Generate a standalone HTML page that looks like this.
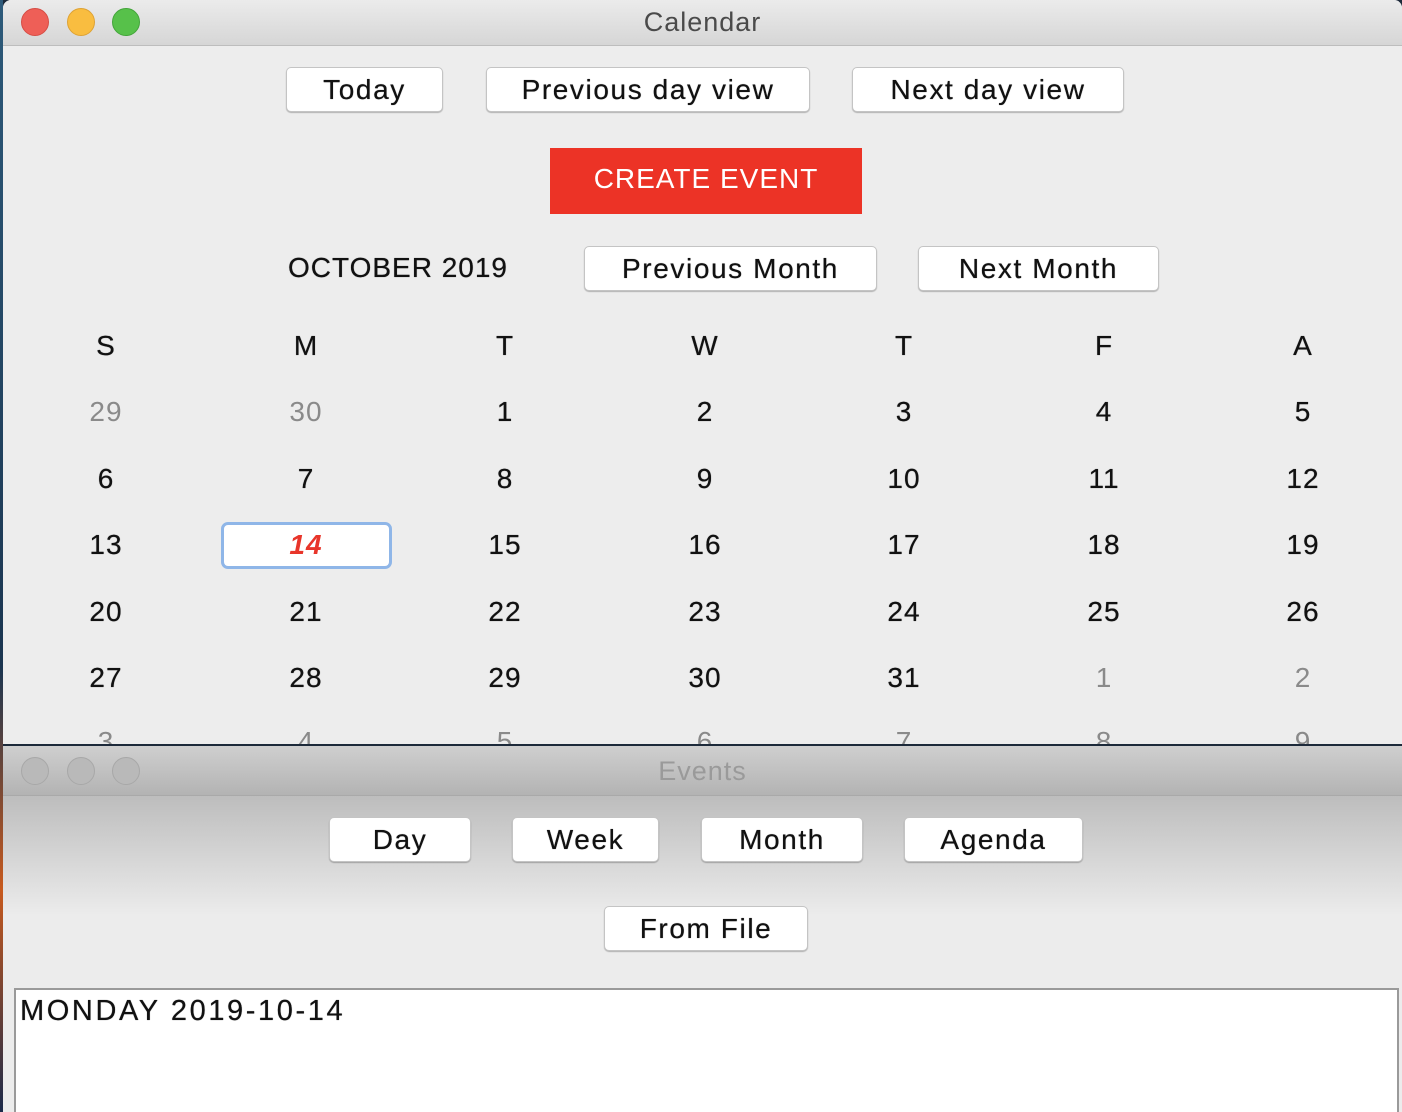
<!DOCTYPE html>
<html><head><meta charset="utf-8"><style>
*{margin:0;padding:0;box-sizing:border-box}
body{width:1402px;height:1112px;overflow:hidden;background:#1d2a3a;font-family:"Liberation Sans",sans-serif;position:relative;letter-spacing:1px}
.abs{position:absolute}
.win1{left:3px;top:0;width:1399px;height:744px;background:#ededed;border-radius:8px 8px 0 0;overflow:hidden}
.tb1{left:0;top:0;width:1399px;height:46px;background:linear-gradient(#ebebeb,#d6d6d6);border-bottom:1px solid #bdbdbd}
.title{width:100%;text-align:center;top:7px;font-size:27px;color:#4a4a4a}
.dot{width:28px;height:28px;border-radius:50%}
.btn{background:#fff;border:1px solid #c4c4c4;border-radius:5px;box-shadow:0 1px 1px rgba(0,0,0,.25);text-align:center;font-size:28px;color:#111;line-height:43px;letter-spacing:1.6px;text-shadow:0 0 0.6px #111}
.c{width:200px;text-align:center;font-size:28px;color:#111;height:40px;line-height:40px;text-shadow:0 0 0.6px #111}
.g{color:#8a8a8a;text-shadow:none}
.win2{left:3px;top:746px;width:1399px;height:366px;background:#ececec;overflow:hidden}
.tb2{left:0;top:0;width:1399px;height:50px;background:linear-gradient(#cfcfcf,#b3b3b3);border-bottom:1px solid #a9a9a9}
</style></head><body>
<div class="abs" style="left:0;top:0;width:3px;height:1112px;background:linear-gradient(#2d5a7a,#1b3550 60%,#c85a1e 80%,#1b2a4a)"></div>
<div class="abs win1">
 <div class="abs tb1">
  <div class="abs dot" style="left:18px;top:8px;background:#ee5f57;border:1px solid #d64d45"></div>
  <div class="abs dot" style="left:64px;top:8px;background:#f9bd40;border:1px solid #dea234"></div>
  <div class="abs dot" style="left:109px;top:8px;background:#57c14a;border:1px solid #43a53a"></div>
  <div class="abs title">Calendar</div>
 </div>
 <div class="abs btn" style="left:283px;top:67px;width:157px;height:45px">Today</div>
 <div class="abs btn" style="left:483px;top:67px;width:324px;height:45px">Previous day view</div>
 <div class="abs btn" style="left:849px;top:67px;width:272px;height:45px">Next day view</div>
 <div class="abs" style="left:547px;top:148px;width:312px;height:66px;background:#ec3326;color:#fff;font-size:28px;text-align:center;line-height:62px;letter-spacing:1px">CREATE EVENT</div>
 <div class="abs" style="left:245px;top:248px;width:300px;text-align:center;font-size:28px;color:#111;line-height:40px;text-shadow:0 0 0.6px #111">OCTOBER 2019</div>
 <div class="abs btn" style="left:581px;top:246px;width:293px;height:45px">Previous Month</div>
 <div class="abs btn" style="left:915px;top:246px;width:241px;height:45px">Next Month</div>

 <div class="abs" style="left:218px;top:522px;width:171px;height:47px;border:3px solid #8fb6e8;border-radius:7px;background:#fff"></div>

 <div class="abs c" style="left:3px;top:326px">S</div>
 <div class="abs c" style="left:203px;top:326px">M</div>
 <div class="abs c" style="left:402px;top:326px">T</div>
 <div class="abs c" style="left:602px;top:326px">W</div>
 <div class="abs c" style="left:801px;top:326px">T</div>
 <div class="abs c" style="left:1001px;top:326px">F</div>
 <div class="abs c" style="left:1200px;top:326px">A</div>

 <div class="abs c g" style="left:3px;top:392px">29</div>
 <div class="abs c g" style="left:203px;top:392px">30</div>
 <div class="abs c" style="left:402px;top:392px">1</div>
 <div class="abs c" style="left:602px;top:392px">2</div>
 <div class="abs c" style="left:801px;top:392px">3</div>
 <div class="abs c" style="left:1001px;top:392px">4</div>
 <div class="abs c" style="left:1200px;top:392px">5</div>

 <div class="abs c" style="left:3px;top:459px">6</div>
 <div class="abs c" style="left:203px;top:459px">7</div>
 <div class="abs c" style="left:402px;top:459px">8</div>
 <div class="abs c" style="left:602px;top:459px">9</div>
 <div class="abs c" style="left:801px;top:459px">10</div>
 <div class="abs c" style="left:1001px;top:459px">11</div>
 <div class="abs c" style="left:1200px;top:459px">12</div>

 <div class="abs c" style="left:3px;top:525px">13</div>
 <div class="abs c" style="left:203px;top:525px;color:#e8352a;font-style:italic;font-weight:bold;text-shadow:none">14</div>
 <div class="abs c" style="left:402px;top:525px">15</div>
 <div class="abs c" style="left:602px;top:525px">16</div>
 <div class="abs c" style="left:801px;top:525px">17</div>
 <div class="abs c" style="left:1001px;top:525px">18</div>
 <div class="abs c" style="left:1200px;top:525px">19</div>

 <div class="abs c" style="left:3px;top:592px">20</div>
 <div class="abs c" style="left:203px;top:592px">21</div>
 <div class="abs c" style="left:402px;top:592px">22</div>
 <div class="abs c" style="left:602px;top:592px">23</div>
 <div class="abs c" style="left:801px;top:592px">24</div>
 <div class="abs c" style="left:1001px;top:592px">25</div>
 <div class="abs c" style="left:1200px;top:592px">26</div>

 <div class="abs c" style="left:3px;top:658px">27</div>
 <div class="abs c" style="left:203px;top:658px">28</div>
 <div class="abs c" style="left:402px;top:658px">29</div>
 <div class="abs c" style="left:602px;top:658px">30</div>
 <div class="abs c" style="left:801px;top:658px">31</div>
 <div class="abs c g" style="left:1001px;top:658px">1</div>
 <div class="abs c g" style="left:1200px;top:658px">2</div>

 <div class="abs c g" style="left:3px;top:722px">3</div>
 <div class="abs c g" style="left:203px;top:722px">4</div>
 <div class="abs c g" style="left:402px;top:722px">5</div>
 <div class="abs c g" style="left:602px;top:722px">6</div>
 <div class="abs c g" style="left:801px;top:722px">7</div>
 <div class="abs c g" style="left:1001px;top:722px">8</div>
 <div class="abs c g" style="left:1200px;top:722px">9</div>
</div>

<div class="abs win2">
 <div class="abs" style="left:0;top:50px;width:1399px;height:120px;background:linear-gradient(#bdbdbd,#ececec)"></div>
 <div class="abs tb2">
  <div class="abs dot" style="left:18px;top:11px;background:#b9b9b9;border:1px solid #a8a8a8"></div>
  <div class="abs dot" style="left:64px;top:11px;background:#b9b9b9;border:1px solid #a8a8a8"></div>
  <div class="abs dot" style="left:109px;top:11px;background:#b9b9b9;border:1px solid #a8a8a8"></div>
  <div class="abs title" style="top:10px;color:#9a9a9a">Events</div>
 </div>
 <div class="abs btn" style="left:326px;top:71px;width:142px;height:45px">Day</div>
 <div class="abs btn" style="left:509px;top:71px;width:147px;height:45px">Week</div>
 <div class="abs btn" style="left:698px;top:71px;width:162px;height:45px">Month</div>
 <div class="abs btn" style="left:901px;top:71px;width:179px;height:45px">Agenda</div>
 <div class="abs btn" style="left:601px;top:160px;width:204px;height:45px">From File</div>
 <div class="abs" style="left:11px;top:242px;width:1385px;height:140px;background:#fff;border:2px solid #9a9a9a;border-bottom:none"></div>
 <div class="abs" style="left:17px;top:245px;font-size:29px;color:#111;line-height:40px;letter-spacing:2.6px;text-shadow:0 0 0.6px #111">MONDAY 2019-10-14</div>
</div>
</body></html>
